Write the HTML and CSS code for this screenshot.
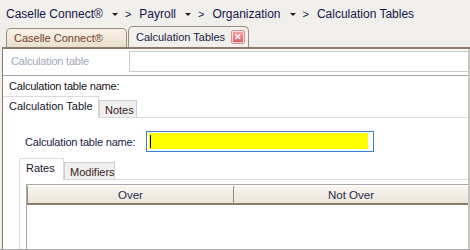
FILE: index.html
```html
<!DOCTYPE html>
<html lang="en">
<head>
    <meta charset="UTF-8">
    <title>Calculation Tables</title>
    <link rel="stylesheet" href="styles.css">
</head>
<body>
    <div class="window">
        <div class="crumbs">
            <span class="crumb">Caselle Connect®</span><span class="drop"></span><span class="sep">&gt;</span>
            <span class="crumb">Payroll</span><span class="drop"></span><span class="sep">&gt;</span>
            <span class="crumb">Organization</span><span class="drop"></span><span class="sep">&gt;</span>
            <span class="crumb">Calculation Tables</span>
        </div>

        <div class="doc-tabs">
            <div class="doc-tab">Caselle Connect®</div>
            <div class="doc-tab active">Calculation Tables <span class="close">&#x2715;</span></div>
        </div>

        <div class="doc-body">
            <div class="search-row">
                <span class="search-label">Calculation table</span>
                <div class="search-box"></div>
            </div>

            <div class="name-line">Calculation table name:</div>

            <div class="tabs">
                <div class="tab active tab-calc">Calculation Table</div>
                <div class="tab tab-notes">Notes</div>
            </div>

            <div class="panel">
                <div class="field-row">
                    <label class="field-label">Calculation table name:</label>
                    <div class="field-input"><span class="fill"><span class="caret"></span></span></div>
                </div>

                <div class="tabs sub">
                    <div class="tab active tab-rates">Rates</div>
                    <div class="tab tab-mods">Modifiers</div>
                </div>

                <div class="subpanel">
                    <div class="grid">
                        <div class="grid-head">
                            <div class="col col-over">Over</div>
                            <div class="col col-notover">Not Over</div>
                        </div>
                    </div>
                </div>
            </div>
        </div>
    </div>
</body>
</html>
```

FILE: styles.css
```css
html, body {
    margin: 0;
    padding: 0;
}
body {
    font-family: "Liberation Sans", Arial, sans-serif;
    font-size: 11px;
    color: #1b1b3a;
    background-color: #ffffff;
    width: 470px;
    height: 250px;
    overflow: hidden;
}
.window {
    height: 249px;
    border-bottom: 1px solid #a8a8a8;
    background-color: #f0efeb;
    display: flex;
    flex-direction: column;
    overflow: hidden;
}
.crumbs {
    height: 27px;
    display: flex;
    align-items: center;
    padding-left: 6px;
    font-size: 12px;
    color: #15154a;
    white-space: nowrap;
}
.crumb {
    margin-right: 9px;
}
.drop {
    width: 0;
    height: 0;
    border-left: 3px solid transparent;
    border-right: 3px solid transparent;
    border-top: 3px solid #202020;
    margin: 2px 7px 0 0;
}
.sep {
    margin-right: 8px;
    font-size: 11px;
}
.doc-tabs {
    height: 20px;
    display: flex;
    align-items: flex-end;
    padding-left: 4px;
    border-bottom: 2px solid #8c7b6b;
    margin-left: 2px;
}
.doc-tab {
    width: 121px;
    height: 19px;
    box-sizing: border-box;
    border: 1px solid #9d8b79;
    border-bottom: none;
    border-radius: 5px 5px 0 0;
    background: linear-gradient(#f8f3e8, #e9dfcb);
    color: #6f3f35;
    padding: 3px 0 0 7px;
    margin-right: 1px;
    font-size: 11px;
    white-space: nowrap;
}
.doc-tab.active {
    width: 121px;
    height: 21px;
    background: #f1f0ec;
    color: #1a1a45;
    padding: 4px 0 0 7px;
    display: flex;
    align-items: flex-start;
}
.close {
    display: inline-flex;
    align-items: center;
    justify-content: center;
    box-sizing: border-box;
    width: 14px;
    height: 14px;
    margin-left: auto;
    margin-right: 3px;
    margin-top: -1px;
    border: 1px solid #d69090;
    border-radius: 2px;
    background: linear-gradient(#f3a6a6, #dd5c5c);
    box-shadow: 0 0 0 1px #f6dede inset;
    color: #ffffff;
    font-size: 9px;
    font-weight: bold;
    line-height: 1;
}
.doc-body {
    flex: 1;
    background-color: #ffffff;
    border-left: 1px solid #8c7b6b;
    border-right: 2px solid #c6c5bd;
    margin-left: 2px;
    display: flex;
    flex-direction: column;
}
.search-row {
    display: flex;
    align-items: center;
    height: 24px;
    padding-top: 2px;
    border-bottom: 1px solid #a6a6a6;
}
.search-label {
    width: 118px;
    padding-left: 8px;
    color: #a0a8b8;
    font-size: 11px;
    letter-spacing: -0.2px;
    align-self: flex-start;
    padding-top: 4px;
}
.search-box {
    flex: 1;
    height: 19px;
    border: 1px solid #cacaca;
    border-right: none;
    align-self: flex-start;
}
.name-line {
    height: 20px;
    line-height: 20px;
    padding-left: 6px;
    color: #141414;
    font-size: 11px;
    letter-spacing: -0.2px;
}
.tabs {
    display: flex;
    align-items: flex-end;
    border-bottom: 1px solid #d9d9d9;
    height: 21px;
}
.tab {
    height: 17px;
    box-sizing: border-box;
    padding: 3px 0 0 5px;
    background-color: #f0f0f0;
    border: 1px solid #cfcfcf;
    border-bottom: none;
    color: #3a1a1a;
    font-size: 11px;
    white-space: nowrap;
}
.tab.active {
    height: 22px;
    margin-bottom: -1px;
    padding: 3px 0 0 6px;
    background-color: #ffffff;
    border-color: #d9d9d9;
    border-left: none;
    color: #141428;
}
.tab-calc {
    width: 96px;
}
.tab-notes {
    width: 38px;
}
.tab-rates {
    width: 44px;
}
.tab-mods {
    width: 51px;
}
.panel {
    flex: 1;
    display: flex;
    flex-direction: column;
}
.field-row {
    display: flex;
    align-items: center;
    padding: 13px 0 0 22px;
}
.field-label {
    width: 121px;
    color: #1b1b48;
    font-size: 11px;
    letter-spacing: -0.2px;
}
.field-input {
    width: 228px;
    height: 21px;
    border: 1px solid #3d7fcf;
    padding: 1px 5px 2px 2px;
    box-sizing: border-box;
    display: flex;
}
.fill {
    flex: 1;
    background-color: #ffff00;
    display: flex;
    align-items: center;
    padding-left: 1px;
}
.caret {
    width: 1px;
    height: 13px;
    background-color: #000000;
}
.tabs.sub {
    margin: 6px 0 0 16px;
    border-left: 1px solid #d9d9d9;
}
.subpanel {
    flex: 1;
    margin-left: 16px;
    border-left: 1px solid #d9d9d9;
    padding: 4px 0 0 6px;
}
.grid {
    height: 100%;
    border-top: 1px solid #a8a8a8;
    border-left: 1px solid #a8a8a8;
}
.grid-head {
    display: flex;
    height: 20px;
}
.col {
    box-sizing: border-box;
    height: 20px;
    line-height: 18px;
    text-align: center;
    color: #2a2a50;
    font-size: 11.5px;
    background: linear-gradient(#f8f6f0, #ebe5d8);
    border-left: 1px solid #9a8a7a;
    border-top: 1px solid #ffffff;
    border-bottom: 2px solid #8c7b6b;
    border-radius: 3px 3px 0 0;
}
.col-over {
    width: 206px;
}
.col-notover {
    flex: 1;
}
```
